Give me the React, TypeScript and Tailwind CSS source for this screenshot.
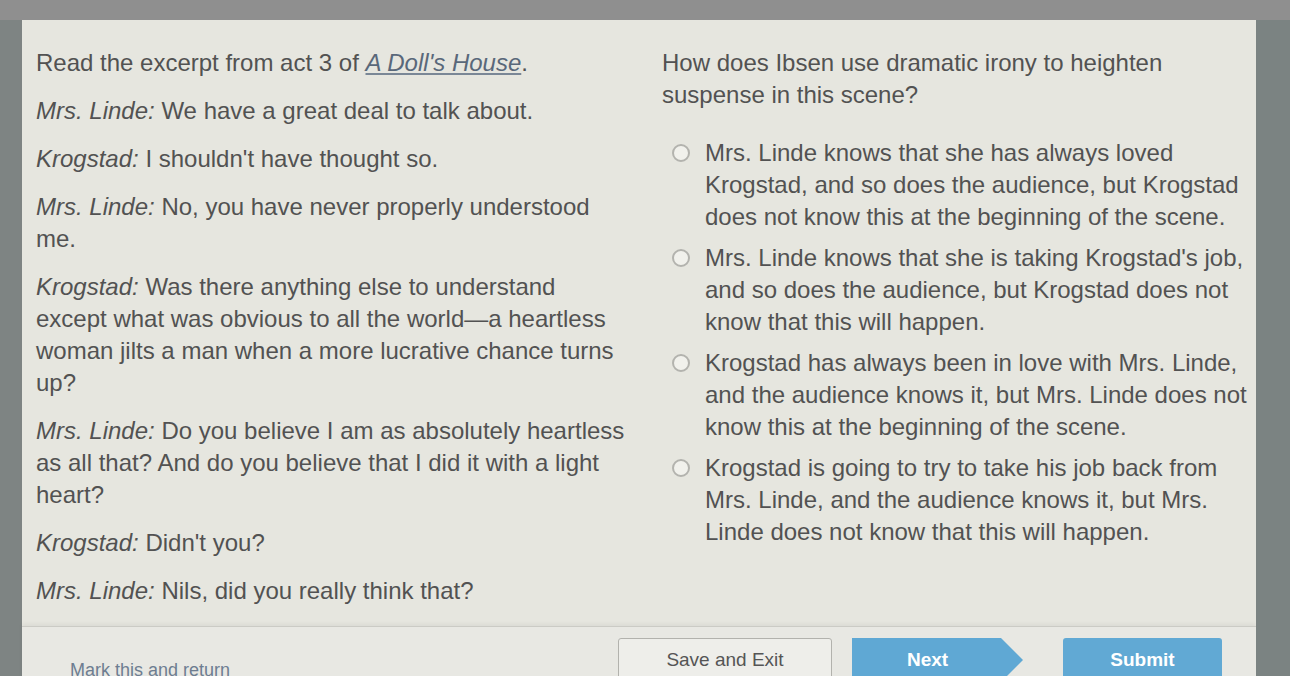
import React from "react";

type Line = { speaker?: string; text: string };

const excerpt: Line[] = [
  { speaker: "Mrs. Linde:", text: "We have a great deal to talk about." },
  { speaker: "Krogstad:", text: "I shouldn't have thought so." },
  { speaker: "Mrs. Linde:", text: "No, you have never properly understood me." },
  {
    speaker: "Krogstad:",
    text: "Was there anything else to understand except what was obvious to all the world\u2014a heartless woman jilts a man when a more lucrative chance turns up?",
  },
  {
    speaker: "Mrs. Linde:",
    text: "Do you believe I am as absolutely heartless as all that? And do you believe that I did it with a light heart?",
  },
  { speaker: "Krogstad:", text: "Didn't you?" },
  { speaker: "Mrs. Linde:", text: "Nils, did you really think that?" },
];

const choices = [
  "Mrs. Linde knows that she has always loved Krogstad, and so does the audience, but Krogstad does not know this at the beginning of the scene.",
  "Mrs. Linde knows that she is taking Krogstad's job, and so does the audience, but Krogstad does not know that this will happen.",
  "Krogstad has always been in love with Mrs. Linde, and the audience knows it, but Mrs. Linde does not know this at the beginning of the scene.",
  "Krogstad is going to try to take his job back from Mrs. Linde, and the audience knows it, but Mrs. Linde does not know that this will happen.",
];

function Radio() {
  return (
    <span className="mt-[7px] h-[18px] w-[18px] shrink-0 rounded-full border-2 border-[#b3b3ae] bg-[#f1f1ec]" />
  );
}

export default function App() {
  return (
    <div className="flex h-[676px] w-[1290px] flex-col overflow-hidden bg-[#8c8e8d] font-['Liberation_Sans',Arial,sans-serif] text-[#525252]">
      <div className="h-[20px] shrink-0 bg-[#8f8f8f]" />
      <div className="flex min-h-0 flex-1">
        <div className="w-[22px] shrink-0 bg-[#7e8483]" />
        <div className="flex min-w-0 flex-1 flex-col bg-[#e6e6df]">
          {/* question area */}
          <div className="flex h-[606px] shrink-0 overflow-hidden">
            <div className="w-[640px] shrink-0 pl-[14px] pt-[27px] text-[24px] leading-[32px]">
              <p className="mb-[16px] w-[590px]">
                Read the excerpt from act 3 of{" "}
                <span className="italic text-[#59687a] underline decoration-[#7a8796] underline-offset-2">
                  A Doll's House
                </span>
                .
              </p>
              {excerpt.map((l, i) => (
                <p key={i} className="mb-[16px] w-[590px]">
                  <span className="italic">{l.speaker}</span> {l.text}
                </p>
              ))}
            </div>
            <div className="flex-1 pt-[27px] text-[24px] leading-[32px]">
              <p className="w-[540px]">
                How does Ibsen use dramatic irony to heighten suspense in this scene?
              </p>
              <div className="mt-[26px] flex flex-col gap-[9px] pl-[10px]">
                {choices.map((c, i) => (
                  <label key={i} className="flex items-start gap-[15px]">
                    <Radio />
                    <span className="w-[545px]">{c}</span>
                  </label>
                ))}
              </div>
            </div>
          </div>

          {/* footer bar */}
          <div className="flex flex-1 items-start border-t border-[#cbcbc5] bg-[#e8e8e3] pl-[48px] pt-[11px] shadow-[0_-2px_4px_rgba(0,0,0,0.05)]">
            <span className="mt-[22px] w-[548px] shrink-0 text-[18px] leading-[20px] text-[#6d7d91]">
              Mark this and return
            </span>
            <button className="flex h-[44px] w-[214px] shrink-0 items-center justify-center rounded-[3px] border border-[#b2b2ad] bg-[#eeeeea] text-[19px] text-[#555]">
              Save and Exit
            </button>
            <button className="ml-[20px] flex h-[44px] w-[171px] shrink-0 items-center justify-center bg-[#5fa8d4] pr-[20px] text-[19px] font-bold text-white [clip-path:polygon(0_0,calc(100%_-_22px)_0,100%_50%,calc(100%_-_22px)_100%,0_100%)]">
              Next
            </button>
            <button className="ml-[40px] flex h-[44px] w-[159px] shrink-0 items-center justify-center rounded-[3px] bg-[#61a9d4] text-[19px] font-bold text-white">
              Submit
            </button>
          </div>
        </div>
        <div className="w-[34px] shrink-0 bg-[#7b8382]" />
      </div>
    </div>
  );
}
